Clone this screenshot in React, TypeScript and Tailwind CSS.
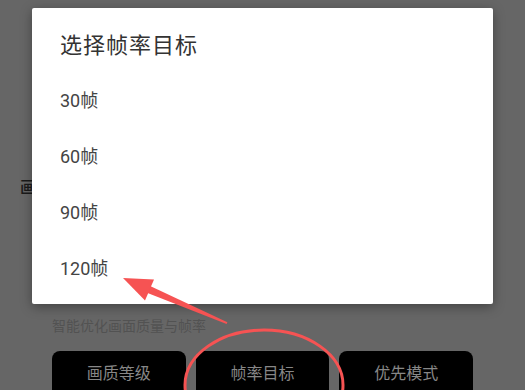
import React from "react";

const font = { fontFamily: "Roboto, 'Noto Sans CJK SC', sans-serif" };

export default function App() {
  const items = ["30帧", "60帧", "90帧", "120帧"];
  return (
    <div
      className="relative w-[525px] h-[390px] overflow-hidden bg-[#666666]"
      style={font}
    >
      {/* page content under the scrim */}
      <div className="flex flex-col pt-[177px]">
        <div className="pl-[20px] text-[16px] leading-[22px] text-[#1a1a1a] font-medium">
          画质设置
        </div>
        <div className="mt-[117px] pl-[52px] text-[14px] leading-[20px] text-[#525252]">
          智能优化画面质量与帧率
        </div>
        <div className="mt-[15px] px-[52px] grid grid-cols-3 gap-[10px]">
          {["画质等级", "帧率目标", "优先模式"].map((t) => (
            <div
              key={t}
              className="h-[48px] pb-[2px] rounded-[8px] bg-black flex items-center justify-center text-[16px] text-[#878787]"
            >
              {t}
            </div>
          ))}
        </div>
      </div>

      {/* dialog */}
      <div className="absolute left-[32px] top-[8px] w-[461px] h-[296px] bg-white rounded-[2px] shadow-[0_3px_12px_rgba(0,0,0,0.35)] pl-[28px] pt-[24px]">
        <div className="text-[22px] leading-[28px] text-[#333333] tracking-[1px]">
          选择帧率目标
        </div>
        <div className="mt-[12px] flex flex-col">
          {items.map((t) => (
            <div
              key={t}
              className="h-[56px] flex items-center text-[18px] text-[#444444]"
            >
              {t}
            </div>
          ))}
        </div>
      </div>

      {/* annotations */}
      <svg
        className="absolute inset-0 pointer-events-none"
        width="525"
        height="390"
        viewBox="0 0 525 390"
      >
        <polygon
          points="227.4,322.3 226.6,324.1 145,292 148,285"
          fill="#f65353"
        />
        <polygon points="123,278 154,279.5 145,300.5" fill="#f65353" />
        <ellipse
          cx="264"
          cy="385"
          rx="79"
          ry="55"
          fill="none"
          stroke="#f65353"
          strokeWidth="3"
        />
      </svg>
    </div>
  );
}
